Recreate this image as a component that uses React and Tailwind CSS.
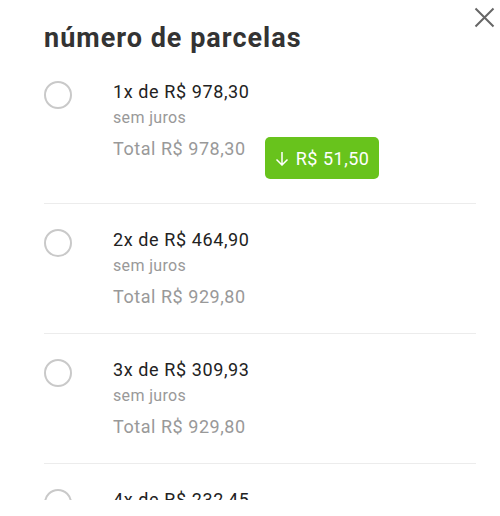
import React from "react";

const options = [
  { n: 1, value: "978,30", total: "978,30", discount: "51,50" },
  { n: 2, value: "464,90", total: "929,80" },
  { n: 3, value: "309,93", total: "929,80" },
  { n: 4, value: "232,45", total: "929,80" },
];

const Row = ({ option }) => {
  return (
    <li className="flex pt-[24px] pb-[24px] border-b border-[#ececec]">
      <span className="mt-[1px] h-[28px] w-[28px] shrink-0 rounded-full border-2 border-[#c9c9c9]" />
      <div className="ml-[41px]">
        <p className="text-[18px] leading-[24px] tracking-[0.6px] text-[#222]">
          {option.n}x de R$ {option.value}
        </p>
        <p className="mt-[2.5px] text-[16px] leading-[22px] tracking-[0.35px] text-[#999]">sem juros</p>
        <div className="mt-[8.5px] flex items-start">
          <p className="text-[18px] leading-[24px] tracking-[0.55px] text-[#999]">Total R$ {option.total}</p>
          {option.discount && (
            <span className="ml-[19px] flex h-[42px] items-center gap-[7px] rounded-[5px] bg-[#68c31c] px-[10px] text-[18px] tracking-[0.5px] text-white">
              <svg width="14" height="15" viewBox="0 0 14 15" fill="none" stroke="currentColor" strokeWidth="1.5">
                <path d="M7 1v13M1.5 8.5L7 14l5.5-5.5" />
              </svg>
              R$ {option.discount}
            </span>
          )}
        </div>
      </div>
    </li>
  );
};

export default function App() {
  return (
    <div className="relative h-[500px] overflow-hidden bg-white font-['Roboto',sans-serif]">
      <button className="absolute right-[5px] top-[7px] text-[#666]">
        <svg width="21" height="21" viewBox="0 0 21 21" fill="none" stroke="currentColor" strokeWidth="2">
          <path d="M1.5 1.5l18 18M19.5 1.5l-18 18" />
        </svg>
      </button>
      <div className="pl-[44px] pr-[24px]">
        <h1 className="pt-[22px] text-[27px] font-bold leading-[32px] tracking-[1px] text-[#333]">número de parcelas</h1>
        <ul className="mt-[2px]">
          {options.map((o) => (
            <Row key={o.n} option={o} />
          ))}
        </ul>
      </div>
    </div>
  );
}
